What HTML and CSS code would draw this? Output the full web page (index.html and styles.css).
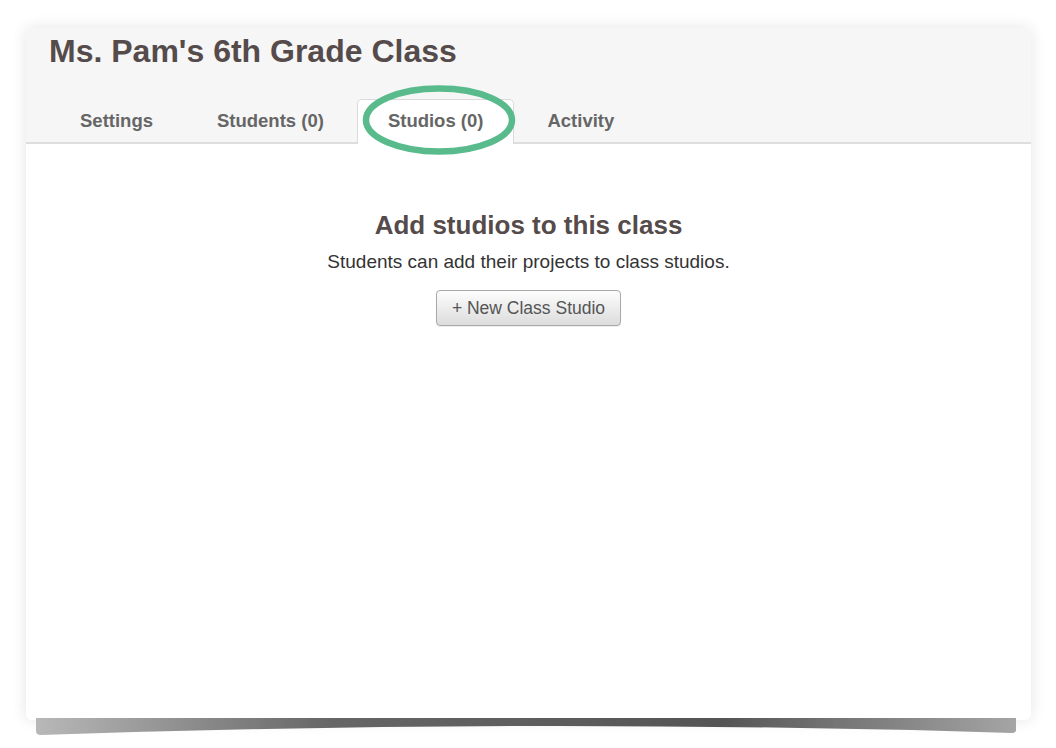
FILE: index.html
```html
<!DOCTYPE html>
<html lang="en">
<head>
  <meta charset="UTF-8">
  <title>Ms. Pam's 6th Grade Class – Studios</title>
  <link rel="stylesheet" href="styles.css">
</head>
<body>
  <div class="frame">
    <div class="card">
      <!-- curled paper shadow under the card -->
      <svg class="curl" width="988" height="24" viewBox="0 0 988 24">
        <defs>
          <linearGradient id="curlFill" x1="0" x2="1" y1="0" y2="0">
            <stop offset="0" stop-color="#b8b8b8"/>
            <stop offset="0.3" stop-color="#666"/>
            <stop offset="0.7" stop-color="#555"/>
            <stop offset="1" stop-color="#a5a5a5"/>
          </linearGradient>
          <filter id="soft" x="-1%" y="-30%" width="102%" height="160%">
            <feGaussianBlur stdDeviation="0.7"/>
          </filter>
        </defs>
        <path d="M4 2 H984 V14 Q984 17 980 17 Q494 2 9 19 Q4 19 4 15 Z" fill="url(#curlFill)" filter="url(#soft)"/>
      </svg>

      <header class="class-header">
        <h1 class="class-title">Ms. Pam's 6th Grade Class</h1>
        <nav class="tabs">
          <a class="tab">Settings</a>
          <a class="tab">Students (0)</a>
          <a class="tab active">Studios (0)
            <svg class="ring" width="160" height="76" viewBox="0 0 160 76">
              <ellipse cx="80" cy="38" rx="73" ry="31.5" fill="none" stroke="#59bb8c" stroke-width="6.5"/>
            </svg>
          </a>
          <a class="tab">Activity</a>
        </nav>
      </header>

      <section class="empty">
        <h2>Add studios to this class</h2>
        <p>Students can add their projects to class studios.</p>
        <button class="new-studio">+ New Class Studio</button>
      </section>
    </div>
  </div>
</body>
</html>
```

FILE: styles.css
```css
/* ====== Base ====== */
body{margin:0;background:#fff;font-family:'Liberation Sans',Arial,Helvetica,sans-serif;color:#333}
.frame{padding:28px 25px 28px 26px}
.card{position:relative;isolation:isolate;height:692px;background:#fff;border-radius:6px;box-shadow:0 0 16px rgba(0,0,0,.11);display:flex;flex-direction:column}
.curl{position:absolute;left:6px;bottom:-20px;z-index:-1}

/* ====== Header & tabs ====== */
.class-header{background:#f6f6f6;border-radius:6px 6px 0 0;border-bottom:2px solid #dedede;padding:5px 0 0 23px}
.class-title{margin:0;font-size:32px;line-height:36px;font-weight:bold;color:#554b4b}
.tabs{display:flex;gap:2px;margin-top:30px;margin-bottom:-2px}
.tab{position:relative;padding:0 30px;height:43px;line-height:42px;font-size:18.5px;font-weight:bold;color:#666;border:1px solid transparent;border-bottom:none;border-radius:5px 5px 0 0}
.tab.active{background:#fff;border-color:#dadada;height:44px}
.ring{position:absolute;left:1px;top:-18px}

/* ====== Empty state ====== */
.empty{display:flex;flex-direction:column;align-items:center;padding-top:65px}
.empty h2{margin:0;font-size:26px;line-height:32px;color:#554b4b}
.empty p{margin:8px 0 0;font-size:19px;line-height:26px;color:#333}
.new-studio{margin-top:15px;height:36px;padding:0 15px;font-family:inherit;font-size:17.5px;color:#555;background:linear-gradient(#fdfdfd,#dcdcdc);border:1px solid #a9a9a9;border-radius:4px;box-shadow:0 1px 1px rgba(0,0,0,.08)}
```
